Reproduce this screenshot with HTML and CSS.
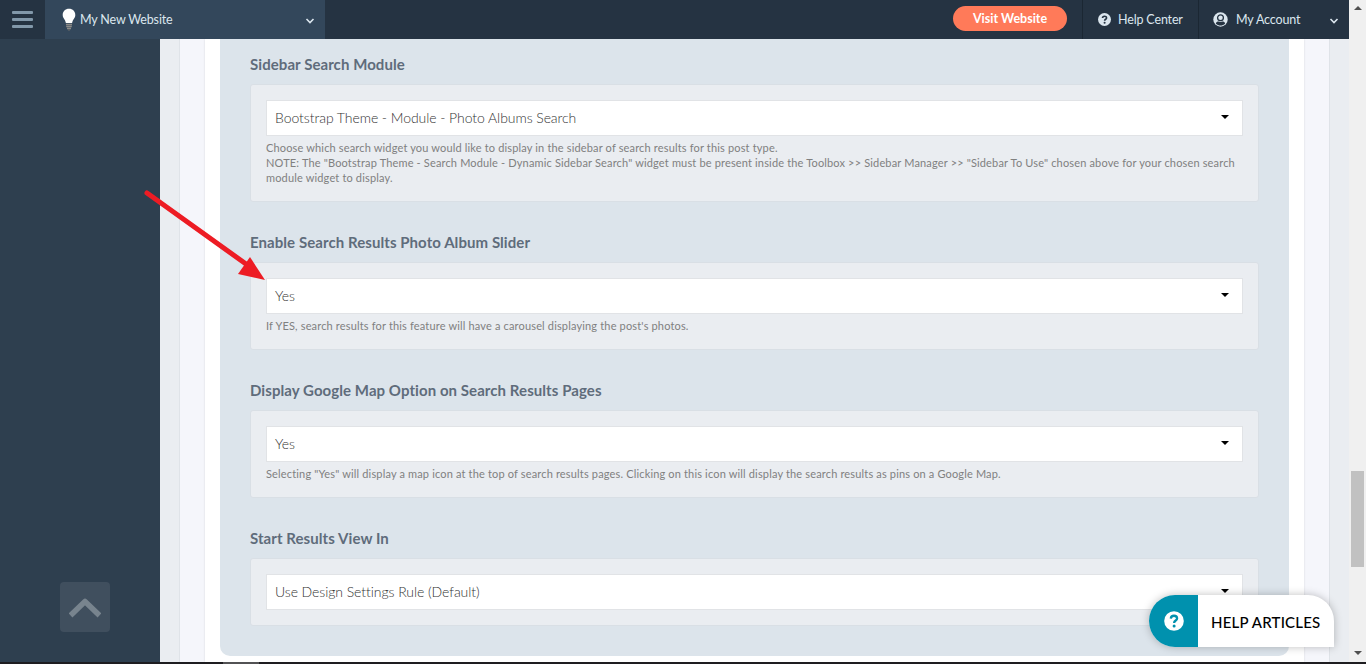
FILE: index.html
```html
<!DOCTYPE html>
<html lang="en">
<head>
    <meta charset="UTF-8">
    <meta name="viewport" content="width=device-width, initial-scale=1.0">
    <title>My New Website</title>
    <link rel="stylesheet" href="styles.css">
</head>
<body>
    <div class="window">
        <div class="app">
            <header class="topbar">
                <div class="menu-toggle"><span></span><span></span><span></span></div>
                <div class="site-select">
                    <svg class="bulb" width="16" height="24" viewBox="0 0 16 24">
                        <path d="M8 .8C4.200.8 1.700 3.400 1.700 6.900c0 3.300 2.800 4.600 3.200 8.100h6.200c.4-3.500 3.200-4.800 3.200-8.100C14.300 3.400 11.800.8 8 .8z" fill="#fff"/>
                        <path d="M5 16.500h6M5.200 18.500h5.600M6 20.500h4" stroke="#8d8b88" stroke-width="1.300"/>
                        <path d="M7 22h2" stroke="#6b6a69"/>
                    </svg>
                    <span class="nav-text">My New Website</span>
                    <svg class="chevron" width="10" height="8" viewBox="0 0 10 8"><path d="M1.500 2l3.500 3.500L8.500 2" fill="none" stroke="#dbe6ee" stroke-width="1.600"/></svg>
                </div>
                <a class="visit">Visit Website</a>
                <div class="nav-item help-center">
                    <svg width="13" height="13" viewBox="0 0 12 12">
                        <circle cx="6" cy="6" r="6" fill="#dbe6ee"/>
                        <path d="M4.200 4.700C4.200 2.500 7.900 2.500 7.900 4.600 7.900 5.800 6.100 5.800 6.100 7.200" fill="none" stroke="#253342" stroke-width="1.500"/>
                        <circle cx="6.100" cy="9" r=".95" fill="#253342"/>
                    </svg>
                    <span class="nav-text">Help Center</span>
                </div>
                <div class="nav-item account">
                    <svg width="15" height="15" viewBox="0 0 15 15">
                        <circle cx="7.500" cy="7.500" r="7.200" fill="#dbe6ee"/>
                        <circle cx="7.500" cy="5.800" r="2.900" fill="#dbe6ee" stroke="#253342" stroke-width="1.300"/>
                        <path d="M2.800 11.500c.5-1.400 1.500-1.900 2.700-1.900 1.300.6 2.700.6 4 0 1.200 0 2.200.5 2.700 1.900-2.700 2.700-6.700 2.700-9.400 0z" fill="#253342"/>
                    </svg>
                    <span class="nav-text">My Account</span>
                    <svg class="chevron" width="10" height="8" viewBox="0 0 10 8"><path d="M1.500 2l3.500 3.500L8.500 2" fill="none" stroke="#dbe6ee" stroke-width="1.600"/></svg>
                </div>
            </header>

            <div class="main">
                <aside class="sidebar">
                    <a class="to-top">
                        <svg width="32" height="22" viewBox="0 0 32 22"><path d="M3.500 17.500L16 5.500l12.500 12" fill="none" stroke="#78848e" stroke-width="5.500" stroke-linecap="square" stroke-linejoin="round"/></svg>
                    </a>
                </aside>
                <main class="content">
                    <div class="panel">
                        <div class="panel-inner">
                            <form class="settings">
                                <h4>Sidebar Search Module</h4>
                                <div class="card">
                                    <div class="select"><span>Bootstrap Theme - Module - Photo Albums Search</span></div>
                                    <p class="hint">Choose which search widget you would like to display in the sidebar of search results for this post type.<br>NOTE: The "Bootstrap Theme - Search Module - Dynamic Sidebar Search" widget must be present inside the Toolbox &gt;&gt; Sidebar Manager &gt;&gt; "Sidebar To Use" chosen above for your chosen search<br>module widget to display.</p>
                                </div>
                                <h4>Enable Search Results Photo Album Slider</h4>
                                <div class="card">
                                    <div class="select"><span>Yes</span></div>
                                    <p class="hint">If YES, search results for this feature will have a carousel displaying the post's photos.</p>
                                </div>
                                <h4>Display Google Map Option on Search Results Pages</h4>
                                <div class="card">
                                    <div class="select"><span>Yes</span></div>
                                    <p class="hint">Selecting "Yes" will display a map icon at the top of search results pages. Clicking on this icon will display the search results as pins on a Google Map.</p>
                                </div>
                                <h4>Start Results View In</h4>
                                <div class="card">
                                    <div class="select"><span>Use Design Settings Rule (Default)</span></div>
                                </div>
                            </form>
                        </div>
                    </div>
                </main>
            </div>
        </div>
        <div class="scrollbar">
            <i class="arrow-up"></i>
            <i class="thumb"></i>
            <i class="arrow-down"></i>
        </div>
    </div>
    <div class="taskbar"><span></span></div>

    <svg class="pointer" width="126" height="99" viewBox="0 0 126 99">
        <path d="M7 12L106 83" stroke="#ed1c24" stroke-width="5" stroke-linecap="round"/>
        <path d="M125 99l-27-6 12-17z" fill="#ed1c24"/>
    </svg>

    <div class="help-articles">
        <div class="help-icon">
            <svg width="20" height="20" viewBox="0 0 20 20">
                <circle cx="10" cy="10" r="9.800" fill="#fff"/>
                <path d="M6.800 7.600C7 3.700 13.100 4 13.100 7.400 13.100 9.600 10.100 9.500 10.100 12" fill="none" stroke="#0091ae" stroke-width="2.300"/>
                <circle cx="10.100" cy="14.900" r="1.500" fill="#0091ae"/>
            </svg>
        </div>
        <div class="help-label">HELP ARTICLES</div>
    </div>
</body>
</html>
```
FILE: styles.css
```css
* {
    box-sizing: border-box;
}
body {
    margin: 0;
    height: 664px;
    overflow: hidden;
    font-family: Lato, "Open Sans", sans-serif;
    font-variant-ligatures: none;
    background: #eaedf1;
}
.window {
    display: flex;
    height: 662px;
}
.app {
    flex: 1;
    display: flex;
    flex-direction: column;
}
.topbar {
    display: flex;
    align-items: center;
    height: 39px;
    background: #253342;
    color: #dbe6ee;
    font-size: 12.5px;
    white-space: nowrap;
}
.menu-toggle {
    width: 45px;
    padding-left: 12px;
    display: flex;
    flex-direction: column;
    gap: 4px;
}
.menu-toggle span {
    width: 21px;
    height: 3px;
    border-radius: 1px;
    background: #8298aa;
}
.site-select {
    display: flex;
    align-items: center;
    width: 280px;
    height: 39px;
    padding: 0 10px 0 16px;
    background: #33475b;
}
.bulb {
    margin-right: 3px;
}
.nav-text {
    padding-bottom: 1px;
    letter-spacing: -.15px;
}
.chevron {
    margin-left: auto;
    position: relative;
    top: 1px;
}
.visit {
    margin-left: auto;
    margin-right: 15px;
    width: 114px;
    height: 25px;
    margin-bottom: 2px;
    border-radius: 13px;
    background: #ff7a59;
    color: #fff;
    font-weight: 700;
    line-height: 26px;
    text-align: center;
}
.nav-item {
    display: flex;
    align-items: center;
    height: 39px;
    border-left: 1px solid #1b2733;
}
.help-center {
    width: 116px;
    padding-left: 15px;
    gap: 7px;
}
.account {
    width: 151px;
    padding: 0 10px 0 14px;
    gap: 8px;
}
.main {
    flex: 1;
    display: flex;
}
.sidebar {
    width: 160px;
    padding: 543px 0 0 60px;
    background: #2e3f4f;
}
.to-top {
    display: flex;
    align-items: center;
    justify-content: center;
    width: 50px;
    height: 50px;
    border-radius: 4px;
    background: #404f5e;
}
.content {
    flex: 1;
    padding: 0 19px;
    background: #eaedf1;
}
.panel {
    height: 100%;
    padding: 0 25px;
    background: #f5f6fb;
    border: solid #dfe3e8;
    border-width: 0 1px;
}
.panel-inner {
    height: 100%;
    padding: 0 15px;
    background: #fff;
    box-shadow: 0 0 2px rgba(0, 0, 0, .12);
    clip-path: inset(0 -3px);
}
.settings {
    height: 617px;
    padding: 15px 30px 30px;
    border-radius: 0 0 10px 10px;
    background: #dce4eb;
}
h4 {
    margin: 0 0 10px;
    font-size: 15px;
    line-height: 20px;
    font-weight: 700;
    letter-spacing: .07px;
    color: #5f6c7b;
    white-space: nowrap;
}
.card {
    margin-bottom: 30px;
    padding: 15px;
    border: 1px solid #d9dfe5;
    border-radius: 3px;
    background: #eaedf1;
}
.select {
    display: flex;
    align-items: center;
    justify-content: space-between;
    height: 36px;
    padding: 0 13px 0 8px;
    border: 1px solid #e1e3e6;
    background: #fff;
    color: #333;
    font-size: 14px;
    font-weight: 300;
    letter-spacing: -.06px;
}
.select span {
    padding-bottom: 1px;
}
.select::after {
    content: "";
    border: solid transparent;
    border-width: 4px 4px 0;
    border-top-color: #000;
    margin-bottom: 3px;
}
.hint {
    margin: 4px 0 1px;
    font-size: 11px;
    line-height: 15px;
    letter-spacing: .16px;
    color: #808080;
    white-space: nowrap;
}
.scrollbar {
    display: flex;
    flex-direction: column;
    align-items: center;
    width: 17px;
    background: #f0f0f0;
}
.arrow-up, .arrow-down {
    border: solid transparent;
}
.arrow-up {
    margin-top: 6px;
    border-width: 0 4px 4px;
    border-bottom-color: #505050;
}
.thumb {
    width: 13px;
    height: 96px;
    margin-top: 461px;
    background: #c1c1c1;
}
.arrow-down {
    margin-top: 84px;
    border-width: 4px 4px 0;
    border-top-color: #505050;
}
.taskbar {
    height: 2px;
    padding-left: 223px;
    background: #1e1d20;
}
.taskbar span {
    display: block;
    width: 36px;
    height: 2px;
    background: #525254;
}
.pointer {
    position: absolute;
    left: 140px;
    top: 181px;
    overflow: visible;
}
.help-articles {
    position: absolute;
    left: 1149px;
    top: 595px;
    display: flex;
    width: 185px;
    height: 52px;
    border-radius: 26px 26px 0 26px;
    overflow: hidden;
    background: #fff;
    box-shadow: 0 0 8px rgba(0, 0, 0, .25);
}
.help-icon {
    display: flex;
    align-items: center;
    justify-content: center;
    width: 49px;
    background: #0091ae;
}
.help-label {
    flex: 1;
    padding: 1px 0 0 13px;
    line-height: 52px;
    font-size: 15px;
    font-weight: 500;
    letter-spacing: .2px;
    color: #000;
    white-space: nowrap;
}
```
